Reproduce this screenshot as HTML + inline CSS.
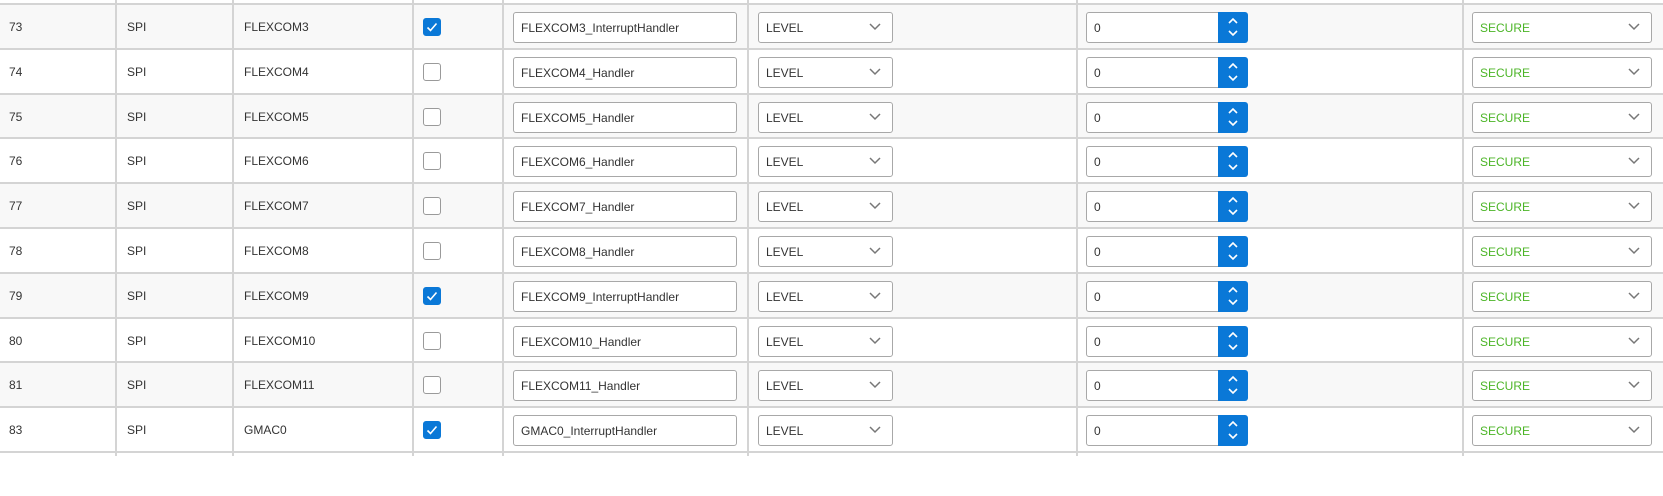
<!DOCTYPE html>
<html><head><meta charset="utf-8"><style>
*{box-sizing:border-box;margin:0;padding:0}
body{width:1663px;height:456px;overflow:hidden;background:#fff;font-family:"Segoe UI","Liberation Sans",sans-serif;font-size:12px;color:#333;position:relative}
.row{position:absolute;left:0;width:1663px;height:44.8px;border-top:2px solid #d4d4d4}
.row.odd{background:#f8f8f8}
.v{position:absolute;top:0;width:2px;height:456px;background:#d4d4d4;z-index:5}
.t{position:absolute;top:0;height:43px;line-height:44px}
.box{position:absolute;top:7px;height:31px;border:1px solid #a8a8a8;border-radius:3px;background:#fff;line-height:30px;padding-left:7px;white-space:nowrap}
.cb{position:absolute;left:423px;top:13px;width:18px;height:18px;border:1px solid #9a9a9a;border-radius:3px;background:#fff}
.cb.on{background:#0a78d7;border-color:#0a78d7}
.chev{position:absolute;right:10px;top:9px}
.spin{position:absolute;left:1218px;top:7px;width:30px;height:31px;background:#0a78d7;border-radius:0 3px 3px 0}
.sec{color:#4cb527}
</style></head><body>
<div id="rows"></div>
<script>
const data=[["73","FLEXCOM3",1,"FLEXCOM3_InterruptHandler"],["74","FLEXCOM4",0,"FLEXCOM4_Handler"],["75","FLEXCOM5",0,"FLEXCOM5_Handler"],["76","FLEXCOM6",0,"FLEXCOM6_Handler"],["77","FLEXCOM7",0,"FLEXCOM7_Handler"],["78","FLEXCOM8",0,"FLEXCOM8_Handler"],["79","FLEXCOM9",1,"FLEXCOM9_InterruptHandler"],["80","FLEXCOM10",0,"FLEXCOM10_Handler"],["81","FLEXCOM11",0,"FLEXCOM11_Handler"],["83","GMAC0",1,"GMAC0_InterruptHandler"]];
const chev='<svg class="chev" width="14" height="10" viewBox="0 0 14 10"><path d="M2 2l5 5 5-5" fill="none" stroke="#777" stroke-width="1.5"/></svg>';
let h='';
data.forEach((d,i)=>{
 h+=`<div class="row ${i%2==0?'odd':''}" style="top:${3+44.8*i}px">
 <div class="t" style="left:9px">${d[0]}</div>
 <div class="t" style="left:127px">SPI</div>
 <div class="t" style="left:244px">${d[1]}</div>
 <div class="cb ${d[2]?'on':''}">${d[2]?'<svg width="16" height="16" viewBox="0 0 16 16"><path d="M3.5 8.5l3 3 6-7" fill="none" stroke="#fff" stroke-width="1.6"/></svg>':''}</div>
 <div class="box" style="left:513px;width:224px">${d[3]}</div>
 <div class="box" style="left:758px;width:135px">LEVEL${chev}</div>
 <div class="box" style="left:1086px;width:134px;border-radius:3px 0 0 3px">0</div>
 <div class="spin"><svg width="30" height="31" viewBox="0 0 30 31"><path d="M11 11l4-4 4 4M11 19l4 4 4-4" fill="none" stroke="#fff" stroke-width="1.6"/></svg></div>
 <div class="box sec" style="left:1472px;width:180px">SECURE${chev}</div>
 </div>`;
});
h+=`<div class="row" style="top:${3+44.8*10}px"></div>`;
[116,233,413,503,748,1077,1463].forEach(x=>h+=`<div class="v" style="left:${x-1}px"></div>`);
document.getElementById('rows').innerHTML=h;
</script>
</body></html>
